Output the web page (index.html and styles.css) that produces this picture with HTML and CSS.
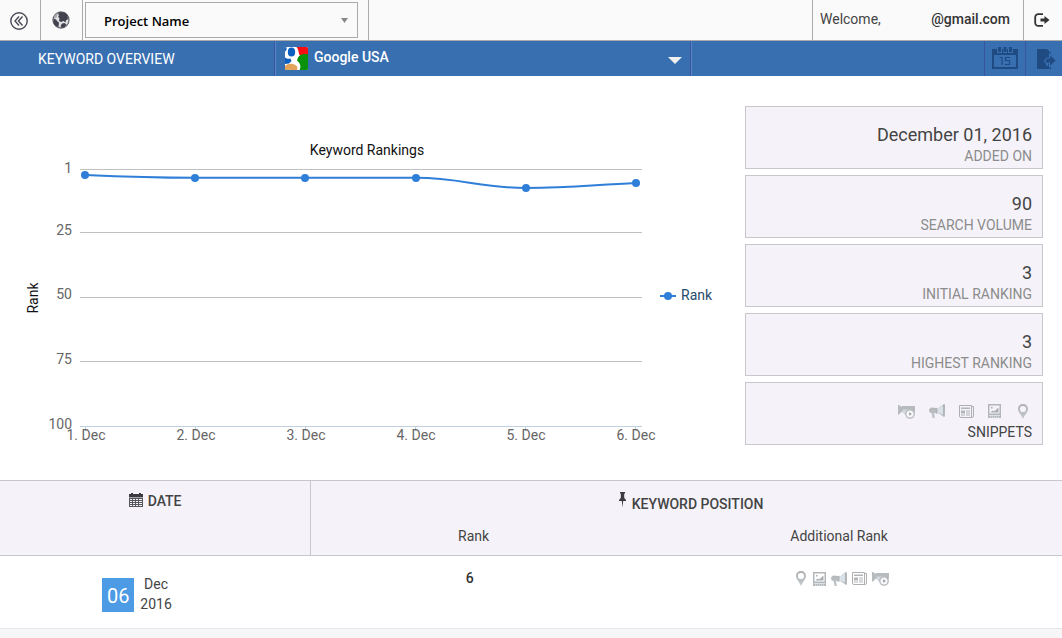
FILE: index.html
```html
<!DOCTYPE html>
<html lang="en">
<head>
<meta charset="utf-8">
<title>Keyword Overview</title>
<link rel="stylesheet" href="styles.css">
</head>
<body>
<svg class="sprite" aria-hidden="true">
  <defs>
    <linearGradient id="silver" x1="0" y1="0" x2="0" y2="1">
      <stop offset="0" stop-color="#b0b0b0"/><stop offset="1" stop-color="#c2c9ce"/>
    </linearGradient>
  </defs>
  <symbol id="pin" viewBox="0 0 10 15">
    <path fill="url(#silver)" fill-rule="evenodd" d="M5 0C2.100 0 0 2.100 0 4.900 0 8 3.300 10.500 5 15 6.700 10.500 10 8 10 4.900 10 2.100 7.900 0 5 0zM5 1.900a3.100 3.100 0 1 1 0 6.200 3.100 3.100 0 0 1 0-6.200z"/>
  </symbol>
  <symbol id="image" viewBox="0 0 13 14">
    <path fill="#b4b7ba" fill-rule="evenodd" d="M0 0h13v14H0zM1.500 1.500v8h10v-8z"/>
    <path fill="#a9adb0" d="M3 3h1.500v1.500H3zM2.500 8.500l2-2 1.500.8 2-1.300 1-1.500L10.500 4v4.500z"/>
    <path fill="#dbe2e7" d="M1 11h11v1H1zM2 12.500h1V14H2zM4 12.500h1V14H4zM6 12.500h1V14H6zM8 12.500h1V14H8zM10 12.500h1V14h-1z"/>
  </symbol>
  <symbol id="megaphone" viewBox="0 0 16 14">
    <path fill="url(#silver)" d="M14.500.5H16v12h-1.500L9 9V4.500zM0 5.500L2 3.500 7.500 4v5.500L5 9l1 5H3.500L2.500 9 .500 8.500z"/>
    <path fill="#dbe2e7" d="M8 4.800l6-3v8.500L8 8.500z"/>
    <path fill="#b2b5b8" d="M7 4l1.500-.3v6L7 9.500zM14 .5h1.500v12H14z"/>
  </symbol>
  <symbol id="news" viewBox="0 0 15 13">
    <path fill="none" stroke="#adafb1" d="M.500.500h12v12H2a1.500 1.500 0 0 1-1.500-1.500zM12.500 1.500h2V11a1.500 1.500 0 0 1-1.500 1.500h-2"/>
    <path fill="#b2b5b7" d="M2 2.500h9V4H2zM2 5.500h4v3H2zM7 5.500h4v1H7zM7 7.500h4v1H7zM2 9.500h4v1H2zM7 9.500h4v1H7z"/>
  </symbol>
  <symbol id="video" viewBox="0 0 17 15">
    <path fill="#b8bbbd" d="M0 1h1l3 2V2h13v5l-2 4H8L4 7.500 1 10.500H0z"/>
    <path fill="#d3dae0" d="M4.500 5.500h9L10 11H7.500L4.500 8z"/>
    <circle cx="12" cy="10" r="4.200" fill="#f8f8fa" stroke="#b3b7ba" stroke-width="1.300"/>
    <path fill="#94989b" d="M11.200 8.200l2.600 1.800-2.600 1.800z"/>
  </symbol>
</svg>

<header class="topbar">
  <button class="top-btn top-btn-back" type="button" aria-label="Collapse menu">
    <svg width="18" height="18" viewBox="0 0 18 18" fill="none" stroke="#4a4a58" stroke-width="1.400">
      <circle cx="9" cy="9" r="8.200"/><path d="M9 4.500L5 9l4 4.500M12.500 4.500L8.500 9l4 4.500"/>
    </svg>
  </button>
  <button class="top-btn top-btn-globe" type="button" aria-label="Sites">
    <svg width="18" height="18" viewBox="0 0 18 18">
      <circle cx="9" cy="9" r="8" fill="#e3e3e6" stroke="#6a6a75" stroke-width="1.300"/>
      <path fill="#43434f" d="M7.500 1L13 1.500l2.500 2.500.5 4-2 1.500-.5 2-2-1.500L9 11 7 10l.5-3L6 6l1-1.500L6 3zM1.500 7.500L4 8.500l1.500 2 1.500 1-.5 4.500L3.500 15 1.500 12zM10 12.500l2.500-.5 2 1.500-2 2.500L10 17l-1.500-2z"/>
      <path fill="#a9a9b0" d="M2.500 4.500L5 2.500l.5 2L4 7l-2 .5z"/>
    </svg>
  </button>
  <div class="project">
    <select class="project-select" aria-label="Project"><option>Project Name</option></select>
    <svg class="project-arrow" width="7" height="5" viewBox="0 0 7 5" aria-hidden="true"><path fill="#888" d="M0 0h7L3.500 5z"/></svg>
  </div>
  <div class="welcome"><span>Welcome,</span><strong class="account">@gmail.com</strong></div>
  <button class="top-btn top-btn-logout" type="button" aria-label="Log out">
    <svg width="16" height="14" viewBox="0 0 16 14">
      <path d="M9 1.100H4.500A3 3 0 0 0 1.200 4v6a3 3 0 0 0 3.300 2.900H9" fill="none" stroke="#333" stroke-width="1.800"/>
      <path fill="#333" d="M6.500 5.500h4V3L15.500 7l-5 4V8.500h-4z"/>
    </svg>
  </button>
</header>

<nav class="navbar">
  <h1 class="nav-title">KEYWORD OVERVIEW</h1>
  <div class="engine">
    <svg class="engine-logo" width="23" height="23" viewBox="0 0 23 23" aria-hidden="true">
      <clipPath id="logo-clip"><rect width="23" height="23" rx="1.500"/></clipPath>
      <g clip-path="url(#logo-clip)">
        <path fill="#fff" d="M0 0h23v23H0z"/>
        <path fill="#f80d12" d="M11.500 0H23v8h-8.500C13.500 6 14 3 11.500 0z"/>
        <path fill="#089209" d="M13 10.500C15.500 7 19 6.500 23 7.500V23h-8.500c2-4 .5-7-2.500-9.500z"/>
        <path fill="#0b5fc0" d="M0 0h1.500v3L0 4.500zM0 10.500c2 1.500 4 1.500 5.500 1L6.500 14 4 16.500l-4 .5z"/>
        <ellipse cx="6.500" cy="5" rx="3.700" ry="4.500" fill="#0b5fc0"/>
        <path fill="#e2a45b" d="M0 23v-4c2.500-2.500 8-3 11-.5 1.500 1.300 2 3 1 4.500z"/>
      </g>
    </svg>
    <select class="engine-select" aria-label="Search engine"><option>Google USA</option></select>
    <svg class="engine-arrow" width="14" height="7" viewBox="0 0 14 7" aria-hidden="true"><path fill="#f1f1f1" d="M0 0h14L7 7z"/></svg>
  </div>
  <div class="nav-actions">
    <button class="nav-btn" type="button" aria-label="Pick date">
      <svg width="26" height="22" viewBox="0 0 26 22">
        <path fill="#1f4b82" fill-rule="evenodd" d="M0 2h5v4h5V2h1v4h4V2h1v4h5V2h5v20H0zM2 8v12h22V8z"/>
        <path fill="#1f4b82" d="M6 0h3v5H6zM11.500 0h3v5h-3zM17 0h3v5h-3z"/>
        <path d="M7.500 10.500H10V18M18 10.500h-4.500v3h4v4h-4.500" fill="none" stroke="#1f4b82" stroke-width="1.200"/>
      </svg>
    </button>
    <button class="nav-btn nav-btn-export" type="button" aria-label="Export">
      <svg width="20" height="20" viewBox="0 0 20 20">
        <path fill="#1f4b82" d="M0 0h10l4 4v16H0z"/>
        <path fill="#1f4b82" stroke="#386fb1" stroke-width="1.200" d="M12.500 5l7 6.500-7 6.500v-4H10.500v3L7.500 11.500 10 9h2.500z"/>
      </svg>
    </button>
  </div>
</nav>

<main>
  <section class="overview">
    <svg class="chart" viewBox="0 0 725 339" role="img" aria-label="Keyword Rankings">
      <text class="chart-title" x="367" y="49">Keyword Rankings</text>
      <text class="chart-title" transform="translate(38 192) rotate(-90)">Rank</text>
      <path class="grid" d="M80 63.500h562M80 126.500h562M80 191.500h562M80 255.500h562"/>
      <path class="axis" d="M80 320.500h562M85.500 320v5M195.500 320v5M305.500 320v5M415.500 320v5M525.500 320v5M635.500 320v5"/>
      <g class="y-labels">
        <text x="72" y="67">1</text><text x="72" y="129">25</text><text x="72" y="193">50</text><text x="72" y="258">75</text><text x="72" y="323">100</text>
      </g>
      <g class="x-labels">
        <text x="86" y="334">1. Dec</text><text x="196" y="334">2. Dec</text><text x="306" y="334">3. Dec</text><text x="416" y="334">4. Dec</text><text x="526" y="334">5. Dec</text><text x="636" y="334">6. Dec</text>
      </g>
      <path class="line" d="M85 69C129 71 151 71.800 195 71.800H416C460 71.800 482 82 526 82C570 82 592 79 636 77M660 190h16"/>
      <g class="dots">
        <circle cx="85" cy="69" r="4"/><circle cx="195" cy="72" r="4"/><circle cx="305" cy="72" r="4"/><circle cx="416" cy="72" r="4"/><circle cx="526" cy="82" r="4"/><circle cx="636" cy="77" r="4"/><circle cx="668" cy="190" r="4"/>
      </g>
      <text class="legend" x="681" y="194">Rank</text>
    </svg>
    <div class="cards">
      <div class="card"><div class="card-value">December 01, 2016</div><div class="card-label">ADDED ON</div></div>
      <div class="card"><div class="card-value">90</div><div class="card-label">SEARCH VOLUME</div></div>
      <div class="card"><div class="card-value">3</div><div class="card-label">INITIAL RANKING</div></div>
      <div class="card"><div class="card-value">3</div><div class="card-label">HIGHEST RANKING</div></div>
      <div class="card">
        <div class="card-value snippets">
          <svg width="17" height="15"><use href="#video"/></svg>
          <svg width="16" height="14"><use href="#megaphone"/></svg>
          <svg width="15" height="13"><use href="#news"/></svg>
          <svg width="13" height="14"><use href="#image"/></svg>
          <svg class="snippet-pin" width="10" height="15"><use href="#pin"/></svg>
        </div>
        <div class="card-label card-label-dark">SNIPPETS</div>
      </div>
    </div>
  </section>

  <table class="history">
    <colgroup><col class="col-date"><col class="col-rank"><col class="col-extra"></colgroup>
    <thead>
      <tr>
        <th class="th-date" rowspan="2" scope="col">
          <svg class="th-icon" width="14" height="14" viewBox="0 0 14 14" aria-hidden="true">
            <path fill="#3c3c40" d="M0 1h2V0h2v1h6V0h2v1h2v3H0z"/>
            <path fill="#55555c" fill-rule="evenodd" d="M0 5h14v9H0zM1 6v1h2V6zM4 6v1h2V6zM7 6v1h2V6zM10 6v1h3V6zM1 8v1h2V8zM4 8v1h2V8zM7 8v1h2V8zM10 8v1h3V8zM1 10v1h2v-1zM4 10v1h2v-1zM7 10v1h2v-1zM10 10v1h3v-1zM1 12v1h2v-1zM4 12v1h2v-1zM7 12v1h2v-1zM10 12v1h3v-1z"/>
            <path fill="#a5a5aa" d="M0 4h14v1H0z"/>
          </svg>DATE
        </th>
        <th class="th-position" colspan="2" scope="colgroup">
          <svg class="th-pin" width="9" height="16" viewBox="0 0 9 16" aria-hidden="true"><path fill="#3c3c40" d="M2 0h5v1.500h-.8V6H2.800V1.500H2zM1 7.500h7V9H5.200L4.500 15.500 3.800 9H1zM2.500 6h4l1 2h-6z"/></svg>KEYWORD POSITION
        </th>
      </tr>
      <tr><th class="th-sub" scope="col">Rank</th><th class="th-sub" scope="col">Additional Rank</th></tr>
    </thead>
    <tbody>
      <tr>
        <td>
          <div class="date"><span class="day">06</span><span class="month">Dec<br>2016</span></div>
        </td>
        <td class="rank">6</td>
        <td class="extra">
          <div class="extra-icons">
            <svg width="10" height="15"><use href="#pin"/></svg>
            <svg class="extra-image" width="13" height="14"><use href="#image"/></svg>
            <svg width="16" height="14"><use href="#megaphone"/></svg>
            <svg width="15" height="13"><use href="#news"/></svg>
            <svg width="17" height="15"><use href="#video"/></svg>
          </div>
        </td>
      </tr>
    </tbody>
  </table>
</main>
</body>
</html>
```
FILE: styles.css
```css
* { box-sizing: border-box; }

body {
  margin: 0;
  background: #f6f6f8;
  color: #444;
  font: 14px/20px Roboto, "Liberation Sans", sans-serif;
}

button {
  padding: 0;
  border: 0;
  background: none;
  cursor: pointer;
}

svg { display: block; }

.sprite { position: absolute; width: 0; height: 0; }

/* Top bar */
.topbar {
  display: flex;
  height: 41px;
  background: #fafafa;
  border-bottom: 1px solid #aaa;
}

.top-btn {
  display: flex;
  align-items: center;
  justify-content: center;
}

.top-btn-back { width: 41px; padding: 2px 2px 0 0; border-right: 1px solid #aaa; }
.top-btn-globe { width: 42px; padding-right: 1px; border-right: 1px solid #aaa; }
.top-btn-logout { width: 39px; padding-right: 2px; border-left: 1px solid #aaa; }

.project {
  position: relative;
  width: 286px;
  padding: 2px 10px 2px 2px;
  border-right: 1px solid #aaa;
}

.project-select {
  appearance: none;
  width: 100%;
  height: 36px;
  padding: 2px 18px 0;
  border: 1px solid #aaa;
  border-radius: 0;
  background: #fafafa;
  color: #000;
  font: 600 13px/20px "Open Sans", "Noto Sans", sans-serif;
}

.project-arrow { position: absolute; right: 20px; top: 18px; }

.welcome {
  display: flex;
  justify-content: space-between;
  width: 211px;
  margin-left: auto;
  padding: 9px 13px 0 7px;
  border-left: 1px solid #aaa;
}

.account { color: #333; font-weight: 500; }

/* Page bar */
.navbar {
  display: flex;
  height: 35px;
  background: #386fb1;
  color: #fff;
}

.nav-title {
  width: 275px;
  margin: 0;
  padding: 8px 0 0 38px;
  border-right: 1px solid #3a559b;
  font-size: 14px;
  font-weight: 400;
  line-height: 20px;
}

.engine {
  position: relative;
  display: flex;
  align-items: flex-start;
  width: 416px;
  padding: 6px 0 0 9px;
  border-left: 1px solid #5585c4;
  border-right: 1px solid #3a559b;
}

.engine-select {
  appearance: none;
  flex: 1;
  height: 20px;
  padding: 0 30px 0 6px;
  border: 0;
  background: none;
  color: #fff;
  font: 500 14px/20px Roboto, "Liberation Sans", sans-serif;
}

.engine-arrow { position: absolute; right: 8px; top: 16px; }

.nav-actions {
  display: flex;
  flex: 1;
  justify-content: flex-end;
  border-left: 1px solid #5585c4;
}

.nav-btn {
  display: flex;
  align-items: flex-start;
  width: 41px;
  padding: 6px 0 0 7px;
  border-left: 1px solid #3a559b;
}

.nav-btn-export { width: 37px; padding: 8px 0 0 11px; }

/* Chart and summary cards */
main { background: #fff; }

.overview {
  display: grid;
  grid-template-columns: 1fr 298px;
  gap: 20px;
  padding: 30px 19px 35px 0;
}

.chart {
  width: 100%;
  font-size: 14px;
}

.chart-title { fill: #111; text-anchor: middle; }
.grid { stroke: #c0c0c0; }
.axis { fill: none; stroke: #c0d0e0; }
.y-labels { fill: #666; text-anchor: end; }
.x-labels { fill: #666; text-anchor: middle; }
.line { fill: none; stroke: #2f7ed8; stroke-width: 2; }
.dots { fill: #2f7ed8; }
.legend { fill: #274b6d; }

.cards {
  display: flex;
  flex-direction: column;
  gap: 6px;
}

.card {
  padding: 17px 10px 2px;
  background: #f5f3f9;
  border: 1px solid #c8c8cc;
  text-align: right;
}

.card-value {
  height: 22px;
  color: #444;
  font-size: 18px;
  line-height: 22px;
}

.card-label { line-height: 20px; color: #8c8c8c; }
.card-label-dark { color: #444; }

.snippets {
  display: flex;
  align-items: center;
  justify-content: flex-end;
  gap: 14px;
  padding-right: 4px;
}

.snippet-pin { margin-left: 3px; }

/* History table */
.history {
  width: 100%;
  border-collapse: separate;
  border-spacing: 0;
  table-layout: fixed;
}

.col-date { width: 29.3%; }
.col-rank { width: 30.6%; }
.col-extra { width: 40.1%; }

.history th {
  padding: 0;
  background: #f5f3f9;
  color: #444;
  font-weight: 500;
  vertical-align: top;
}

.history td { padding: 0; border-bottom: 1px solid #e6e6e8; vertical-align: top; }

.history .th-date {
  padding-top: 10px;
  border: solid #c8c8cc;
  border-width: 1px 1px 1px 0;
}

.history .th-position {
  height: 46px;
  padding: 11px 0 0 8px;
  border-top: 1px solid #c8c8cc;
}

.history .th-sub {
  height: 30px;
  padding-right: 20px;
  border-bottom: 1px solid #c8c8cc;
  font-weight: 400;
}

.history .th-sub:first-child { padding-right: 0; }

.th-icon, .th-pin { display: inline-block; }
.th-icon { margin-right: 5px; vertical-align: -1px; }
.th-pin { margin-right: 5px; vertical-align: 1px; }

.date {
  display: flex;
  justify-content: center;
  gap: 6px;
  padding: 18px 37px 14px 0;
}

.day {
  width: 32px;
  height: 34px;
  margin-top: 4px;
  background: #4d9be4;
  color: #fff;
  font-size: 20px;
  line-height: 36px;
  text-align: center;
}

.month { text-align: center; }

.history .rank { padding: 12px 8px 0 0; color: #333; font-weight: 500; text-align: center; }

.history .extra { padding: 15px 14px 0 0; }

.extra-icons {
  display: flex;
  align-items: center;
  justify-content: center;
  gap: 5px;
}

.extra-image { margin-left: 2px; }
```
